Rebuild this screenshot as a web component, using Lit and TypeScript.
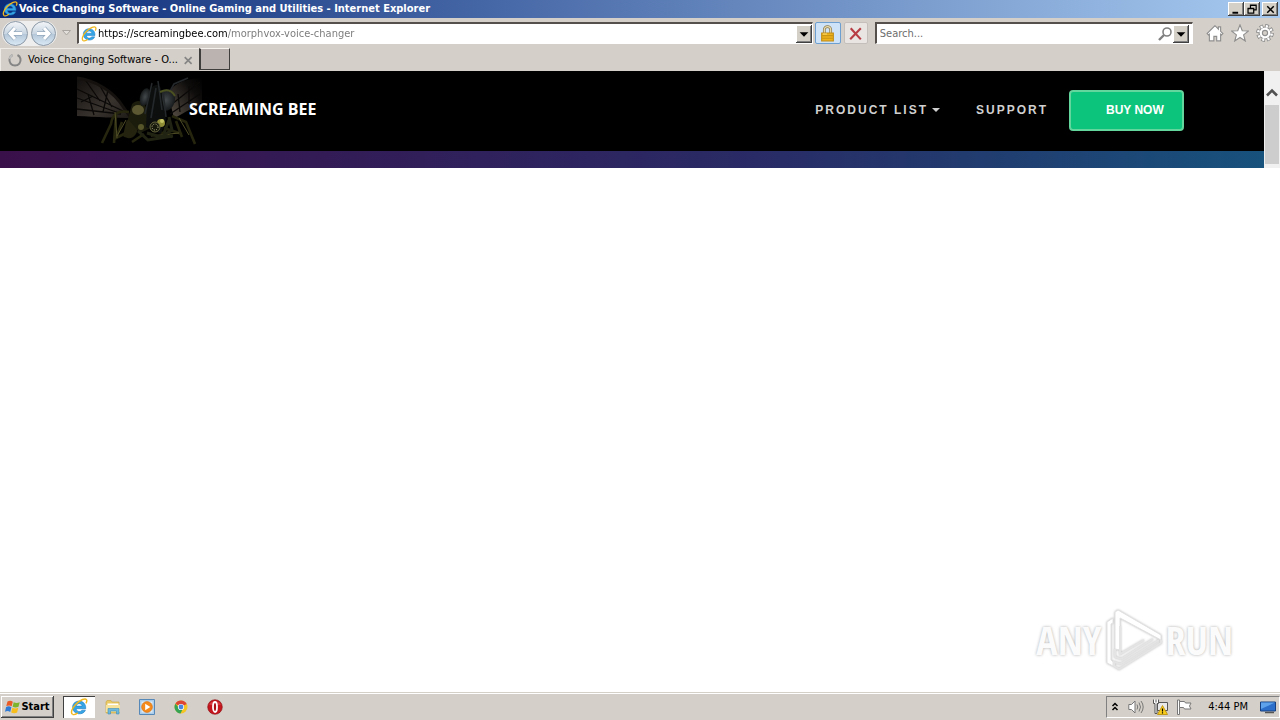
import { LitElement, html, css, svg } from 'lit';
import { customElement, property } from 'lit/decorators.js';

const icons: Record<string, unknown> = {
  ie: svg`
    <path d="M14 9.500H5.500c.2 2.900 4 3.300 5.100 1.300h3.100c-1.600 5-11.400 4.400-11.400-2.500C2.300 .8 14.500.6 14 9.500z
      M5.500 7.200h5.300c-.3-2.900-4.900-2.900-5.300 0z" fill="#35a5e5" stroke="#1b78c0" stroke-width=".5"/>
    <path d="M2.300 14.600C.2 13.400 1.800 9 5 5.700 9 1.500 14-.5 14.800 1.700c.3.900 0 2-.6 3" fill="none" stroke="#f0b71e" stroke-width="1.300"/>
    <path d="M2.300 14.600c1.200.6 3-.2 4.600-1.400" fill="none" stroke="#f0b71e" stroke-width="1.200"/>`,
  lock: svg`
    <path d="M5 8V4.500a3 3 0 0 1 6 0V8" fill="none" stroke="#8a7a50" stroke-width="2.600"/>
    <path d="M5 8V4.500a3 3 0 0 1 6 0V8" fill="none" stroke="#e8dcae" stroke-width="1.200"/>
    <path d="M2.500 7.500h11v7.500h-11z" fill="#eeb21c" stroke="#c08a14"/>
    <path d="M3 10h10M3 12.500h10" stroke="#c89414"/>
    <path d="M3.500 8.500h4" stroke="#fbdc6c"/>`,
  stop: svg`
    <path d="M3.500 3l9.500 10.500M13 3L3 13.500" stroke="#b83c44" stroke-width="2"/>`,
  search: svg`
    <circle cx="10" cy="6" r="4" fill="#fff" stroke="#808080" stroke-width="1.600"/>
    <path d="M7 9l-5 5" stroke="#808080" stroke-width="2.400"/>`,
  home: svg`
    <path d="M8 1.500L1 8.500l1.200 1.200.8-.7v6h4v-4h2.500v4H13V9l.8.700L15 8.500l-2-2v-4h-2v2z" fill="#fff" stroke="#8f8f8f"/>`,
  star: svg`
    <path d="M8 .8l2 5.200 5.500.2-4.300 3.500 1.500 5.400L8 12l-4.700 3.100 1.500-5.400L.5 6.200 6 6z" fill="#fff" stroke="#8f8f8f"/>`,
  gear: svg`
    <circle cx="8" cy="8" r="6.400" fill="none" stroke="#8f8f8f" stroke-width="3" stroke-dasharray="3.200 1.826"/>
    <circle cx="8" cy="8" r="5.300" fill="#fff" stroke="#8f8f8f" stroke-width="1"/>
    <circle cx="8" cy="8" r="6" fill="none" stroke="#fff" stroke-width="2.200" stroke-dasharray="1.800 2.912" stroke-dashoffset="-.6"/>
    <circle cx="8" cy="8" r="2.300" fill="#d4cfc8" stroke="#8f8f8f"/>`,
  spinner: svg`
    <path d="M5.500 3a5.600 5.600 0 1 0 5 0" fill="none" stroke="#858585" stroke-width="2"/>
    <path d="M5.500 3a5.600 5.600 0 0 0-3 4" fill="none" stroke="#bdbdbd" stroke-width="2"/>`,
  windows: svg`
    <path d="M2.500 2.500c2-1 3.500-1 5.300.2L6.700 7.300C5 6.200 3.400 6.200 1.300 7.100z" fill="#ea5a24"/>
    <path d="M8.700 3.200c2 1 3.600 1 6 0l-1.200 4.600c-2 1-3.800 1-5.900 0z" fill="#7cb52c"/>
    <path d="M1.100 8.100c2-1 3.500-1 5.300.2l-1.200 4.600c-1.700-1.100-3.300-1.100-5.200-.2z" fill="#2f7ad4"/>
    <path d="M7.400 8.800c2 1 3.600 1 5.900 0l-1.200 4.600c-2 1-3.800 1-5.900 0z" fill="#f7bd1a"/>`,
  folder: svg`
    <path d="M1 3l1-1.500h4L7 3h7v11H1z" fill="#e9c964" stroke="#c9a440" stroke-width=".6"/>
    <path d="M2.500 4.500h11v2h-11z" fill="#fff"/>
    <path d="M1 6h14v7H1z" fill="#f6e29a"/>
    <path d="M3 15V9.500h11V15h-2.500v-3h-6v3z" fill="#6db8dc" stroke="#3d8db8" stroke-width=".6"/>`,
  player: svg`
    <path d="M.5.500h15v15H.5z" fill="#a9cdea" stroke="#5688b8"/>
    <path d="M2.500 2.500h11v11h-11z" fill="#dcebf6"/>
    <circle cx="8" cy="8" r="5.400" fill="#f48a1c" stroke="#d96c0a" stroke-width=".6"/>
    <path d="M6.200 4.800v6.400L11.300 8z" fill="#fff"/>`,
  chrome: svg`
    <circle cx="8" cy="8" r="6.500" fill="#f4c523"/>
    <path d="M8 8L2.400 4.700A6.500 6.500 0 0 1 13.700 5z" fill="#dd4535"/>
    <path d="M2.400 4.700A6.500 6.500 0 0 0 7.500 14.500L10 9.500 6 9z" fill="#35a353"/>
    <circle cx="8" cy="8" r="3.100" fill="#fff"/>
    <circle cx="8" cy="8" r="2.400" fill="#4a86e0"/>`,
  opera: svg`
    <circle cx="8" cy="8" r="7.300" fill="#c4161c" stroke="#8a0d12" stroke-width=".6"/>
    <path d="M2 5.500a6.500 5 0 0 1 12 0A12 6 0 0 1 2 5.500z" fill="#e2555a" opacity=".6"/>
    <ellipse cx="8" cy="8" rx="2" ry="5" fill="#a80e14" stroke="#fff" stroke-width="1.800"/>`,
  chevrons: svg`
    <path d="M5.500 7L8 4.500 10.500 7M5.500 11L8 8.500 10.500 11" fill="none" stroke="#000" stroke-width="1.500"/>`,
  volume: svg`
    <path d="M.8 5.500h2.700L7 2v12l-3.500-3.500H.8z" fill="#fff" stroke="#777"/>
    <path d="M9 5.500q1.500 2.500 0 5M11 3.500q3 4.500 0 9M13 2q4.400 6 0 12" fill="none" stroke="#777"/>`,
  network: svg`
    <path d="M5.500 3.500h10v8h-10z" fill="#e8e8e8" stroke="#555"/>
    <path d="M1.500.500v4h1.500v10h2v-10h1.500v-4M4 .5v3" fill="#fff" stroke="#555"/>
    <path d="M10.500 6.500l5 9h-10z" fill="#f9cd1c" stroke="#b98a00" stroke-width=".8"/>
    <path d="M10.500 9.500v3M10.500 13.200v1.300" stroke="#000" stroke-width="1.200"/>`,
  flag: svg`
    <path d="M1.500 1h2v14.500h-2z" fill="#fff" stroke="#777"/>
    <path d="M3.500 2.500h5l1 1.500h5.500l-1.500 3 1.500 3H8.500l-1-1.500h-4z" fill="#fff" stroke="#777"/>`,
  desktop: svg`
    <path d="M.5 3h15v9h-15z" fill="#2c6fca" stroke="#16407f"/>
    <path d="M1 3.500h14L1 10z" fill="#5da2ea"/>
    <path d="M5 13.500h9" stroke="#555" stroke-width="1.500"/>`,
  minimize: svg`<path d="M3 12h7" stroke="#000" stroke-width="2.400"/>`,
  restore: svg`
    <path d="M5.500 6.500v-4h7v6h-3M5 3h8" fill="none" stroke="#000" stroke-width="1.500"/>
    <path d="M2.500 6.500h7v6h-7zM2 7h8" fill="none" stroke="#000" stroke-width="1.500"/>`,
  close: svg`<path d="M4 4l8 8M12 4l-8 8" stroke="#000" stroke-width="1.800"/>`,
  closeTab: svg`<path d="M2.500 3l10 10M12.500 3l-10 10" stroke="#858585" stroke-width="2.400"/>`,
  down: svg`<path d="M3 6h10l-5 5z" fill="#000"/>`,
  up: svg`<path d="M3 11l5-5 5 5" fill="none" stroke="#505050" stroke-width="2.600"/>`,
};

@customElement('x-icon')
export class XIcon extends LitElement {

  @property()
  name = '';

  static styles = css`
    :host {
      display: block;
      flex: none;
      width: 16px;
      height: 16px;
    }

    svg {
      display: block;
      width: 100%;
      height: 100%;
    }
  `;

  render() {
    return html`<svg viewBox="0 0 16 16" aria-hidden="true">${icons[this.name]}</svg>`;
  }
}

@customElement('browser-chrome')
export class BrowserChrome extends LitElement {

  static styles = css`
    :host {
      display: block;
      font: 11px/16px "DejaVu Sans Condensed", "DejaVu Sans", sans-serif;
      background: #d4cfc8;
      color: #000;
    }

    button {
      padding: 0;
      border: 0;
      background: none;
      font: inherit;
    }

    .title {
      display: flex;
      align-items: center;
      height: 18px;
      padding: 0 2px;
      background: linear-gradient(to right, #0b2a78, #a6caf0);
      color: #fff;
    }

    h1 {
      flex: 1;
      margin: 0 0 0 1px;
      font-size: 11px;
      font-weight: bold;
      white-space: nowrap;
    }

    .window-button {
      display: flex;
      align-items: center;
      justify-content: center;
      width: 16px;
      height: 14px;
      background: #d4d0c8;
      box-shadow: inset -1px -1px #404040, inset 1px 1px #fff, inset -2px -2px #808080;
    }

    .window-button:last-child {
      margin-left: 2px;
    }

    .window-button x-icon {
      width: 13px;
      height: 13px;
    }

    .bar {
      display: flex;
      align-items: center;
      height: 30px;
      padding: 0 6px 0 2px;
    }

    .nav {
      display: flex;
      gap: 3px;
      padding: 0 1px;
      border-radius: 14px;
      background: #eee;
    }

    .round {
      width: 25px;
      height: 25px;
      border: 1px solid #8b98a6;
      border-radius: 50%;
      background: linear-gradient(#f2f5f8, #c9d6e2 50%, #b3c6d8 51%, #d9e8f4);
    }

    .round svg {
      display: block;
      margin: auto;
    }

    .history {
      width: 18px;
      margin-right: 2px;
    }

    .field {
      display: flex;
      align-items: center;
      box-sizing: border-box;
      height: 22px;
      padding-left: 2px;
      border: 1px solid #fff;
      border-top: 2px solid #55504c;
      border-left: 2px solid #55504c;
      background: #fff;
    }

    .address {
      flex: 7;
    }

    .find {
      flex: 3;
      margin-left: 7px;
    }

    input {
      flex: 1;
      min-width: 0;
      padding: 0;
      border: 0;
      outline: 0;
      background: none;
      font: inherit;
    }

    .address input {
      margin-left: 1px;
      background: linear-gradient(to right, #000 129px, #777 129px);
      background-clip: text;
      color: transparent;
    }

    .find input {
      padding-left: 1px;
    }

    input::placeholder {
      color: #6d6d6d;
      opacity: 1;
    }

    .drop {
      width: 16px;
      height: 18px;
      background: #d4d0c8;
      box-shadow: inset -1px -1px #404040, inset 1px 1px #fff, inset -2px -2px #808080;
    }

    .find .drop {
      margin-right: 3px;
    }

    .drop x-icon {
      width: 14px;
      height: 14px;
      margin: auto;
    }

    .tool {
      display: flex;
      align-items: center;
      justify-content: center;
      box-sizing: border-box;
      width: 24px;
      height: 22px;
      margin-left: 3px;
      border: 1px solid #c4bfba;
      border-radius: 2px;
      background: #e9e5e3;
    }

    .tool.secure {
      width: 26px;
      margin-left: 2px;
      border-color: #6d9fd0;
      background: #cfe3f8;
    }

    .tool x-icon {
      width: 17px;
      height: 17px;
    }

    .commands {
      display: flex;
      gap: 7px;
      margin-left: 13px;
    }

    .commands x-icon {
      width: 18px;
      height: 18px;
    }

    .tabs {
      display: flex;
      height: 23px;
    }

    .tab {
      display: flex;
      align-items: center;
      justify-content: space-between;
      box-sizing: border-box;
      width: 199px;
      padding: 0 5px 0 6px;
      border-top: 1px solid #eeebe6;
      border-left: 1px solid #eeebe6;
      white-space: nowrap;
    }

    .tab button x-icon {
      width: 11px;
      height: 11px;
    }

    .new-tab {
      width: 31px;
      height: 22px;
      border: 1px solid #403e3c;
      border-left-width: 2px;
      border-top-color: #f5f2ee;
      background: #bab3af;
    }
  `;

  render() {
    return html`
      <div class="title">
        <x-icon name="ie"></x-icon>
        <h1>Voice Changing Software - Online Gaming and Utilities - Internet Explorer</h1>
        <button class="window-button" aria-label="Minimize"><x-icon name="minimize"></x-icon></button>
        <button class="window-button" aria-label="Restore"><x-icon name="restore"></x-icon></button>
        <button class="window-button" aria-label="Close"><x-icon name="close"></x-icon></button>
      </div>
      <div class="bar">
        <div class="nav">
          <button class="round" aria-label="Back">
            <svg width="17" height="17" viewBox="0 0 17 17"><path d="M8 3L3 8.500 8 14M3.500 8.500H15" fill="none" stroke="#94a9bd" stroke-width="4.600"/><path d="M8 3L3 8.500 8 14M3.500 8.500H15" fill="none" stroke="#fff" stroke-width="3"/></svg>
          </button>
          <button class="round" aria-label="Forward">
            <svg width="17" height="17" viewBox="0 0 17 17"><path d="M9 3l5 5.500L9 14M13.500 8.500H2" fill="none" stroke="#94a9bd" stroke-width="4.600"/><path d="M9 3l5 5.500L9 14M13.500 8.500H2" fill="none" stroke="#fff" stroke-width="3"/></svg>
          </button>
        </div>
        <button class="history" aria-label="Recent pages">
          <svg width="9" height="6" viewBox="0 0 9 6"><path d="M.5.500h8l-4 4.500z" fill="#e2deda" stroke="#a9a5a0"/></svg>
        </button>
        <div class="field address">
          <x-icon name="ie"></x-icon>
          <input aria-label="Address" .value=${'https://screamingbee.com/morphvox-voice-changer'}>
          <button class="drop" aria-label="Show addresses"><x-icon name="down"></x-icon></button>
        </div>
        <button class="tool secure" aria-label="Security report"><x-icon name="lock"></x-icon></button>
        <button class="tool" aria-label="Stop"><x-icon name="stop"></x-icon></button>
        <div class="field find">
          <input aria-label="Search" placeholder="Search...">
          <button aria-label="Go"><x-icon name="search"></x-icon></button>
          <button class="drop" aria-label="Search providers"><x-icon name="down"></x-icon></button>
        </div>
        <div class="commands">
          <button aria-label="Home"><x-icon name="home"></x-icon></button>
          <button aria-label="Favorites"><x-icon name="star"></x-icon></button>
          <button aria-label="Tools"><x-icon name="gear"></x-icon></button>
        </div>
      </div>
      <div class="tabs">
        <div class="tab">
          <x-icon name="spinner"></x-icon>
          <span>Voice Changing Software - O...</span>
          <button aria-label="Close tab"><x-icon name="closeTab"></x-icon></button>
        </div>
        <button class="new-tab" aria-label="New tab"></button>
      </div>
    `;
  }
}

@customElement('site-page')
export class SitePage extends LitElement {

  static styles = css`
    :host {
      display: flex;
      position: relative;
      align-items: flex-start;
      background: #fff;
    }

    .page {
      flex: 1;
    }

    header {
      display: flex;
      align-items: center;
      box-sizing: border-box;
      height: 80px;
      padding: 0 80px 2px 76px;
      background: #000;
      font: bold 12px/16px "Liberation Sans", Arial, sans-serif;
    }

    a {
      color: #d0d0d0;
      text-decoration: none;
    }

    .brand {
      display: flex;
      align-items: center;
      margin-right: auto;
      color: #fff;
      font: bold 16px/20px "Open Sans", sans-serif;
    }

    .brand svg {
      margin-right: -14px;
    }

    .brand span {
      position: relative;
      padding-bottom: 2px;
    }

    nav {
      display: flex;
      align-items: center;
    }

    .link {
      display: flex;
      align-items: center;
      gap: 4px;
      margin-right: 36px;
      letter-spacing: 2px;
    }

    .link:nth-child(2) {
      margin-right: 21px;
    }

    .caret {
      border: 4px solid transparent;
      border-top-color: #d0d0d0;
      border-bottom: 0;
    }

    .buy {
      box-sizing: border-box;
      width: 115px;
      height: 41px;
      padding-left: 35px;
      border: 2px solid #62d69c;
      border-radius: 4px;
      background: #0dc47c;
      color: #fff;
      line-height: 37px;
    }

    .banner {
      height: 17px;
      background: linear-gradient(to right, #3a104a, #292b66 60%, #17527c);
    }

    .scroll {
      width: 16px;
      height: 97px;
      background: #f0f0f0;
    }

    .scroll x-icon {
      height: 34px;
      padding-top: 9px;
      box-sizing: border-box;
    }

    .thumb {
      height: 59px;
      margin: 0 1px;
      background: #cdcdcd;
    }

    .watermark {
      display: flex;
      position: absolute;
      right: 47px;
      bottom: 21px;
      align-items: center;
      gap: 1px;
      color: #fbfbfb;
      font: bold 40px/62px "Liberation Sans Narrow", "Open Sans Condensed", "Liberation Sans", sans-serif;
      text-shadow: 0 0 3px #aaa;
    }

    .watermark svg {
      filter: drop-shadow(0 0 1px #bbb);
    }
  `;

  render() {
    return html`
      <div class="page">
        <header>
          <a class="brand" href="#home">
            ${this.renderBee()}
            <span>SCREAMING BEE</span>
          </a>
          <nav>
            <a class="link" href="#products">PRODUCT LIST<i class="caret"></i></a>
            <a class="link" href="#support">SUPPORT</a>
            <a class="buy" href="#buy">BUY NOW</a>
          </nav>
        </header>
        <div class="banner"></div>
      </div>
      <div class="scroll">
        <x-icon name="up"></x-icon>
        <div class="thumb"></div>
      </div>
      <div class="watermark">
        <span>ANY</span>
        <svg width="62" height="62" viewBox="0 0 62 62">
          <path d="M13 40V3l3-2 43 25v5L18 9v32z" fill="#fff" stroke="#e2e2e2"/>
          <path d="M11 9l-6 4v41l6 3v-4l-2-2V15l2-1z" fill="#fff" stroke="#e2e2e2"/>
          <path d="M18 17v28l24-14M13 40v8l6 2 32-20M59 31v3L17 60l-5-3v-4l6 2 39-24" fill="none" stroke="#e4e4e4" stroke-width="2"/>
        </svg>
        <span>RUN</span>
      </div>
    `;
  }

  renderBee() {
    return html`
      <svg width="127" height="72" viewBox="0 0 127 72" aria-hidden="true">
        <defs>
          <linearGradient id="left" x1="0" y1="0" x2="1" y2="1">
            <stop offset="0" stop-color="#100e0d"/>
            <stop offset=".6" stop-color="#39332e"/>
            <stop offset="1" stop-color="#1d1a16"/>
          </linearGradient>
          <linearGradient id="right" x1="0" y1="1" x2="1" y2="0">
            <stop offset="0" stop-color="#5c5349"/>
            <stop offset=".7" stop-color="#0f0d0c"/>
            <stop offset="1" stop-color="#000"/>
          </linearGradient>
          <radialGradient id="eye">
            <stop offset="0" stop-color="#43494c"/>
            <stop offset="1" stop-color="#16191a"/>
          </radialGradient>
        </defs>
        <path d="M1 4c18 2 34 13 42 23 7 8 11 13 12 17-14 0-34-1-54-2z" fill="url(#left)"/>
        <path d="M92 20c6-10 14-15 34-16v26c-12 4-22 12-28 14z" fill="url(#right)"/>
        <path d="M1 15l46 22M1 24l42 15M1 35l44 5M10 7l14 20M24 12l12 21M32 16l-5 22M12 20l6 21M5 28l12-6M94 40l30-20M96 30l28-22M102 20l2 18M113 12l0 18" fill="none" stroke="#0b0908" stroke-width="1.300"/>
        <path d="M1 4c18 2 34 13 42 23l12 17" fill="none" stroke="#14110e" stroke-width="3"/>
        <path d="M53 38q-16-3-18 12l-9 19M40 41l-2 28M46 48l-6 16 16-8M96 42l14 6 9 22M100 47l6 16M88 54l18 6M68 60l-12 8M84 58l12 5" fill="none" stroke="#26260f" stroke-width="2.600"/>
        <path d="M39 38l2 26M50 46l-9 16M103 44l10 17M75 62l28-3" stroke="#57552a" stroke-width=".9" fill="none"/>
        <path d="M50 48c5-8 13-5 12 5s-8 14-15 9z" fill="#24230f"/>
        <path d="M56 30c6-6 14-3 15 8l4 16-11 5-12-14z" fill="#1c1c0d"/>
        <ellipse cx="62" cy="36" rx="6" ry="5" fill="#6b683c" opacity=".8"/>
        <ellipse cx="69" cy="23" rx="5" ry="9" transform="rotate(15 69 23)" fill="url(#eye)"/>
        <ellipse cx="90" cy="26" rx="9" ry="11" transform="rotate(15 90 26)" fill="url(#eye)"/>
        <path d="M76 13c7-5 10 0 10 10l4 23-5 14-15-7 1-20z" fill="#0d0f0f"/>
        <path d="M76 9l-7 31M82 7l4 29M93 19l5-9 14-6M80 14l-5 30M87 18l3 25" fill="none" stroke="#24282a" stroke-width="1.600"/>
        <path d="M84 18q10-5 15 4" fill="none" stroke="#4c5122" stroke-width="2"/>
        <circle cx="85" cy="49" r="4" fill="#8f8d36"/>
        <circle cx="86" cy="47" r="2" fill="#c5c364"/>
        <circle cx="65" cy="53" r="3" fill="#57562a"/>
        <circle cx="79" cy="53" r="5" fill="#17180c" stroke="#65663c"/>
        <circle cx="79" cy="53" r="3" fill="none" stroke="#bebd8c" stroke-dasharray="1 1.400"/>
        <path d="M71 59l14 4 11-7-3-13M88 59l5-13M62 57l10 9 25-4" fill="none" stroke="#222413" stroke-width="3"/>
      </svg>
    `;
  }
}

@customElement('task-bar')
export class TaskBar extends LitElement {

  static styles = css`
    :host {
      display: flex;
      align-items: center;
      box-sizing: border-box;
      height: 28px;
      padding: 1px 0 0 1px;
      border-top: 1px solid #d4d0c8;
      background: #d4cfc8;
      box-shadow: inset 0 1px #fff;
      font: 11px/16px "DejaVu Sans Condensed", "DejaVu Sans", sans-serif;
    }

    button {
      display: flex;
      align-items: center;
      justify-content: center;
      box-sizing: border-box;
      height: 22px;
      padding: 0;
      border: 0;
      background: none;
      color: #000;
      font: inherit;
    }

    .start {
      width: 53px;
      margin-right: 9px;
      font-weight: bold;
      box-shadow: inset -1px -1px #404040, inset 1px 1px #fff, inset -2px -2px #808080;
    }

    .app {
      width: 34px;
    }

    .app.active {
      width: 32px;
      margin-right: 1px;
      background: #fff;
      box-shadow: inset 1px 1px #404040, inset -1px -1px #fff;
    }

    .app.active x-icon {
      width: 18px;
      height: 18px;
    }

    .tray {
      display: flex;
      align-items: center;
      gap: 8px;
      box-sizing: border-box;
      height: 22px;
      margin-left: auto;
      padding: 0 3px 0 0;
      border: 1px solid #fff;
      border-top-color: #808080;
      border-left-color: #808080;
    }

    .tray button:first-child {
      margin-right: -3px;
    }

    time {
      margin: 0 4px 0 8px;
    }
  `;

  render() {
    return html`
      <button class="start"><x-icon name="windows"></x-icon>Start</button>
      <button class="app active" aria-label="Internet Explorer"><x-icon name="ie"></x-icon></button>
      ${['folder', 'player', 'chrome', 'opera'].map((name) => html`
        <button class="app" aria-label=${name}><x-icon name=${name}></x-icon></button>
      `)}
      <div class="tray">
        ${['chevrons', 'volume', 'network', 'flag'].map((name) => html`
          <button aria-label=${name}><x-icon name=${name}></x-icon></button>
        `)}
        <time>4:44 PM</time>
        <button aria-label="Show desktop"><x-icon name="desktop"></x-icon></button>
      </div>
    `;
  }
}

@customElement('app-root')
export class AppRoot extends LitElement {

  static styles = css`
    :host {
      display: flex;
      flex-direction: column;
      min-height: 100vh;
    }

    site-page {
      flex: 1;
    }
  `;

  render() {
    return html`
      <browser-chrome></browser-chrome>
      <site-page></site-page>
      <task-bar></task-bar>
    `;
  }
}
